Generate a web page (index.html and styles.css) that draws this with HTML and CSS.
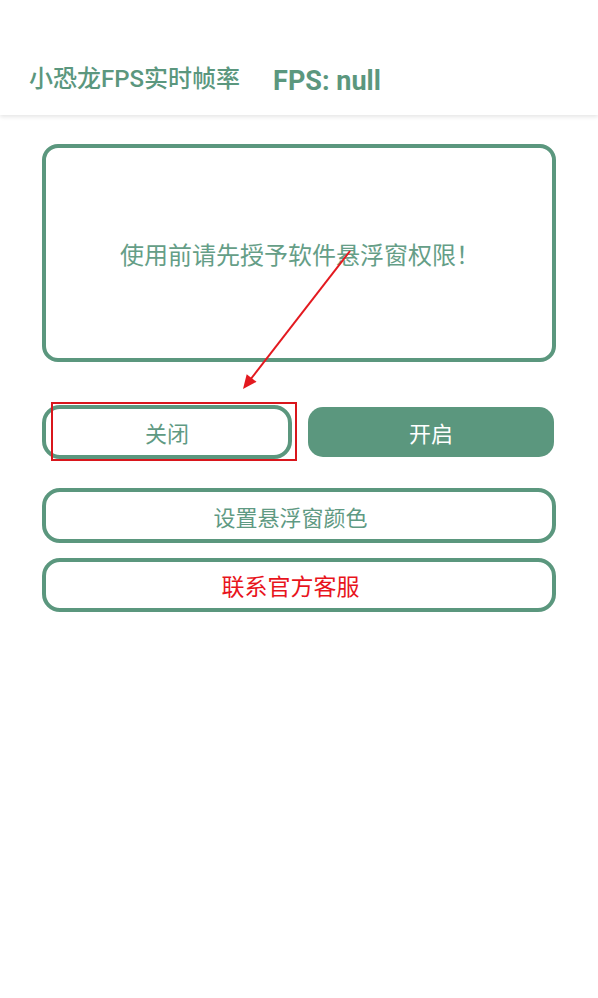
FILE: index.html
```html
<!DOCTYPE html>
<html lang="zh-CN">
<head>
<meta charset="utf-8">
<title>小恐龙FPS实时帧率</title>
<link rel="stylesheet" href="styles.css">
</head>
<body>
<header class="appbar">
  <span class="title">小恐龙FPS实时帧率</span>
  <span class="fps">FPS: null</span>
</header>
<main class="content">
  <div class="notice">使用前请先授予软件悬浮窗权限！</div>
  <div class="row">
    <button class="btn btn-outline btn-half">关闭</button>
    <button class="btn btn-fill btn-half">开启</button>
  </div>
  <button class="btn btn-outline btn-wide">设置悬浮窗颜色</button>
  <button class="btn btn-outline btn-wide btn-red">联系官方客服</button>
</main>
<div class="mark-box"></div>
<svg class="mark-arrow" width="598" height="998" viewBox="0 0 598 998">
  <line x1="350" y1="251" x2="250" y2="380" stroke="#e3191f" stroke-width="2"/>
  <polygon points="243,389 256.5,381.8 246.7,374.2" fill="#e3191f"/>
</svg>
</body>
</html>
```
FILE: styles.css
```css
html, body {
  margin: 0;
  padding: 0;
  background: #ffffff;
}
body {
  width: 598px;
  height: 998px;
  position: relative;
  overflow: hidden;
  font-family: "Roboto", "Noto Sans CJK SC", sans-serif;
}
.appbar {
  height: 115px;
  box-sizing: border-box;
  padding: 40px 0 0 29px;
  display: flex;
  align-items: center;
  background: #fff;
  box-shadow: 0 2px 4px rgba(0,0,0,0.10);
  position: relative;
  z-index: 1;
}
.title {
  font-size: 24px;
  font-weight: 500;
  color: #5b977e;
  margin-top: -2px;
}
.fps {
  font-size: 27px;
  font-weight: 700;
  color: #5b977e;
  margin-left: 33px;
  margin-top: 6px;
}
.content {
  padding: 29px 42px 0 42px;
  display: flex;
  flex-direction: column;
}
.notice {
  height: 218px;
  box-sizing: border-box;
  border: 4px solid #5b977e;
  border-radius: 16px;
  display: flex;
  align-items: center;
  justify-content: center;
  font-family: "Noto Sans CJK SC", sans-serif;
  font-size: 24px;
  color: #659e87;
  padding-left: 2px;
}
.row {
  margin-top: 43px;
  display: flex;
  align-items: center;
  gap: 16px;
  height: 54px;
}
.btn {
  font-family: "Noto Sans CJK SC", sans-serif;
  font-size: 22px;
  box-sizing: border-box;
  margin: 0;
  padding: 0;
  cursor: pointer;
}
.btn-outline {
  background: #fff;
  border: 4px solid #5b977e;
  border-radius: 18px;
  color: #5f9a83;
}
.btn-fill {
  background: #5b977e;
  border: none;
  border-radius: 15px;
  color: #ffffff;
}
.btn-half:first-child {
  width: 250px;
  height: 54px;
}
.btn-half:last-child {
  width: 246px;
  height: 50px;
}
.btn-wide {
  width: 100%;
  height: 55px;
  margin-top: 29px;
  padding-right: 17px;
}
.btn-red {
  margin-top: 15px;
  height: 54px;
  color: #e8141c;
  font-size: 23px;
}
.mark-box {
  position: absolute;
  left: 51px;
  top: 402px;
  width: 246px;
  height: 59px;
  box-sizing: border-box;
  border: 2px solid #d9161c;
  pointer-events: none;
  z-index: 2;
}
.mark-arrow {
  position: absolute;
  left: 0;
  top: 0;
  pointer-events: none;
  z-index: 3;
}
```
